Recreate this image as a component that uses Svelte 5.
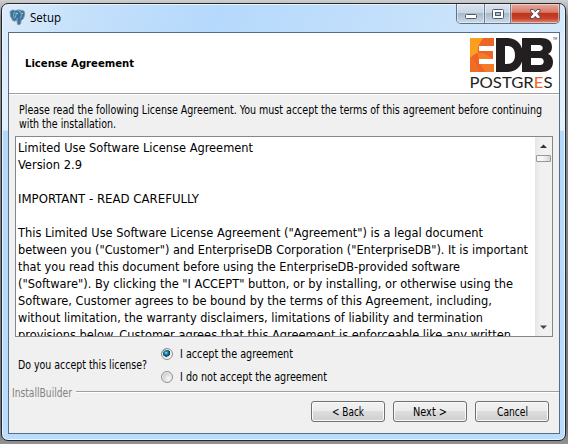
<script>
  const license = [
    ['Limited Use Software License Agreement', 235],
    ['Version 2.9', 64],
    ['', 0],
    ['IMPORTANT - READ CAREFULLY', 181],
    ['', 0],
    ['This Limited Use Software License Agreement ("Agreement") is a legal document', 465],
    ['between you ("Customer") and EnterpriseDB Corporation ("EnterpriseDB"). It is important', 510],
    ['that you read this document before using the EnterpriseDB-provided software', 442],
    ['("Software"). By clicking the "I ACCEPT" button, or by installing, or otherwise using the', 495],
    ['Software, Customer agrees to be bound by the terms of this Agreement, including,', 474],
    ['without limitation, the warranty disclaimers, limitations of liability and termination', 465],
    ['provisions below. Customer agrees that this Agreement is enforceable like any written', 493],
  ];
  const options = [
    ['I accept the agreement', 113],
    ['I do not accept the agreement', 147],
  ];
  const buttons = [['< Back', 32], ['Next >', 34], ['Cancel', 31]];
  let selected = $state(0);
</script>

{#snippet line(text, width, height, baseline)}
  <svg class="line" {width} {height}><text x="0" y={baseline} textLength={width} lengthAdjust="spacingAndGlyphs">{text}</text></svg>
{/snippet}

<div class="desktop">
  <div class="window">
    <header class="titlebar">
      <svg class="elephant" width="17" height="17" viewBox="0 0 17 17">
        <path d="M1 2.5 3.500 1l3 .5L9 1l3 .2L15 2l.8 3-1.200 4.200L13 11l-1 .3-.2 3.200-1.300 1.200-2-.3-.6-4.200-2.400 1-1.700-.6L1.400 7z" fill="#37729c" stroke="#8b98a4" />
        <path d="M5.500 2.500 4.600 5l.5 4.500M7 3.200v2.600l-.7 3M9.500 2.500l2.500.7.4 3-1 3.300M8.200 9v2.500" fill="none" stroke="#a8c9df" stroke-width=".7" />
        <path d="M7.400 4.600h1.300M12.800 4.500h1" stroke="#e6f2fa" />
      </svg>
      <span class="title">{@render line('Setup', 31, 18, 13)}</span>
      <div class="controls">
        <span class="control"><svg width="27" height="19"><rect x="8.500" y="10.500" width="11" height="4" rx="1" fill="#fff" stroke="#535866" /></svg></span>
        <span class="control"><svg width="25" height="19"><rect x="7.500" y="5.500" width="11" height="9" rx="1" fill="#fff" stroke="#535866" /><rect x="10.500" y="8.500" width="5" height="3" fill="#a9bfd6" stroke="#535866" /></svg></span>
        <span class="control close"><svg width="48" height="19"><path d="M19.500 5.500h2.900l1.900 2.300 1.900-2.300h2.900v1.600L26.700 9.800l2.400 2.900v1.800h-2.900l-1.900-2.200-1.900 2.200h-2.900v-1.800l2.400-2.900-2.400-2.700z" fill="#fff" stroke="#535262" /></svg></span>
      </div>
    </header>

    <main class="client">
      <section class="banner">
        <h1>{@render line('License Agreement', 109, 18, 14)}</h1>
        <svg class="logo" width="90" height="56" viewBox="0 0 90 56">
          <defs><clipPath id="e"><path d="M2 3h24v8H11v5h14v8H11v5h15v8H2z" /></clipPath></defs>
          <g clip-path="url(#e)">
            <path d="M0 0h28v40H0z" fill="#ef6424" />
            <path d="M0 0h18C11 7 9 13 10 18 4 19 2 24 0 29z" fill="#f9a01f" />
            <path d="M10 18c0 9 4 15 8 19h9V27c-6-6-9-9-17-9z" fill="#f47b28" />
            <path d="M0 21c4 1 9 7 11 16H0z" fill="#f06d24" />
          </g>
          <path fill-rule="evenodd" fill="#231f20" d="M28 3h11c10 0 16 7 16 17s-6 17-16 17H28zm9 8v18h2c5 0 8-3 8-9s-3-9-8-9z" />
          <path fill-rule="evenodd" fill="#231f20" d="M54 3h19c7 0 11 3 11 9 0 4-2 6-4 7 3 1 5 4 5 8 0 7-5 10-12 10H54zm9 7v6h8c5 0 5-6 0-6zm0 13v7h9c5 0 5-7 0-7z" />
          <text class="wordmark" x="1.500" y="53" textLength="83" lengthAdjust="spacingAndGlyphs">POSTGR<tspan fill="#f26522">E</tspan>S</text>
          <text class="tm" x="85" y="5" textLength="4" lengthAdjust="spacingAndGlyphs">TM</text>
        </svg>
      </section>

      <section class="body">
        <div class="intro">
          {@render line('Please read the following License Agreement. You must accept the terms of this agreement before continuing', 523, 14, 11)}
          {@render line('with the installation.', 97, 14, 11)}
        </div>
        <div class="license">
          <div class="copy">
            {#each license as [text, width]}
              {@render line(text, width, 17, 14)}
            {/each}
          </div>
          <div class="scrollbar">
            <svg width="17" height="17"><path d="M5 11 8.500 7.500l3.500 3.500z" fill="#333" /></svg>
            <span class="thumb"></span>
            <svg class="down" width="17" height="17"><path d="M5 6.500h7L8.500 10z" fill="#444" /></svg>
          </div>
        </div>
        <div class="question">
          <div class="prompt">{@render line('Do you accept this license?', 129, 16, 12)}</div>
          <div class="options">
            {#each options as [text, width], i}
              <label>
                <input type="radio" name="agreement" value={i} bind:group={selected} />
                {@render line(text, width, 16, 12)}
              </label>
            {/each}
          </div>
        </div>
      </section>

      <div class="divider">{@render line('InstallBuilder', 60, 16, 12)}<i></i></div>
      <footer>
        {#each buttons as [text, width]}
          <button>{@render line(text, width, 16, 12)}</button>
        {/each}
      </footer>
    </main>
  </div>
</div>

<style>
  :global(body) { margin: 0; overflow: hidden; }
  * { box-sizing: border-box; }
  svg { display: block; flex: none; }
  .line { overflow: visible; }
  .line text { fill: currentColor; }
  .desktop {
    width: 568px; height: 444px; padding: 3px 1px 3px 1px;
    background: linear-gradient(#cfcfcf, #8d8d8d 4%, #777 96%, #929292);
    font: 11.5px "DejaVu Sans Condensed", "DejaVu Sans", sans-serif;
    font-stretch: condensed; color: #000;
  }
  .window {
    width: 565px; height: 438px; padding: 0 5px 7px 6px;
    border: 1px solid #20272f; border-radius: 7px;
    background: linear-gradient(110deg, #dcecfb 0, #c4e0fb 15%, #b5d9fc 38%, #c4e0fb 70%, #d5e9fc 100%) 0 0 / 100% 29px no-repeat,
      linear-gradient(#d7eafc 0, #e4f1fd 126px, #b4d8fb 127px, #b9dcff);
    box-shadow: inset 0 0 0 1px #e8f5ff;
  }
  .titlebar { height: 28px; display: flex; padding: 5px 0 0 1px; }
  .title { margin: 0 0 0 4px; font: 12px "Open Sans", "Noto Sans", sans-serif; }
  .controls { display: flex; margin: -5px 0 0 auto; height: 20px; border: 1px solid #66717e; border-top: 0; border-radius: 0 0 5px 5px; overflow: hidden; }
  .control { border-right: 1px solid #707c8b; box-shadow: inset 0 0 0 1px #ffffff70; background: linear-gradient(#dbe5ef 0, #c7d4e2 46%, #a6b9cd 48%, #c7dced); }
  .close { border: 0; background: linear-gradient(#e8aa9c 0, #d87967 44%, #bd341b 48%, #c5402a 75%, #e48c70); }
  .client { width: 552px; height: 402px; border: 1px solid #596d80; background: #f0f0f0; display: flex; flex-direction: column; }
  .banner { height: 61px; background: #fff; border-bottom: 1px solid #a0a0a0; display: flex; justify-content: space-between; padding: 2px 1px 0 16px; flex: none; }
  h1 { margin: 18px 0 0; font-size: 11px; font-weight: bold; }
  .wordmark { font: 15.5px Lato, sans-serif; fill: #231f20; }
  .tm { font: 3px Lato, sans-serif; }
  .body { padding: 8px 5px 0 6px; height: 292px; border-top: 1px solid #fff; }
  .intro { padding-left: 4px; height: 33px; }
  .license { height: 201px; width: 538px; border: 1px solid #828790; background: #fff; display: flex; overflow: hidden; }
  .copy { width: 519px; padding: 1px 0 0 2px; font-size: 13px; }
  .scrollbar { width: 17px; background: linear-gradient(90deg, #e6e6e6, #f0f0f0 30%, #f2f2f2); display: flex; flex-direction: column; flex: none; }
  .thumb { width: 15px; height: 7px; margin: 1px 0 0 1px; border: 1px solid #979797; border-radius: 1px; background: linear-gradient(90deg, #f6f6f6 45%, #d4d4d4); }
  .down { margin-top: auto; }
  .question { display: flex; padding: 9px 0 0 3px; }
  .prompt { width: 143px; padding-top: 11px; }
  .options { display: flex; flex-direction: column; gap: 7px; }
  label { display: flex; gap: 7px; align-items: center; height: 16px; }
  input { appearance: none; margin: 0; width: 12px; height: 12px; border: 1px solid #8e8f8f; border-radius: 50%; background: radial-gradient(circle at 65% 65%, #fafafa, #c9cdd0 65%); box-shadow: inset 0 0 0 1px #f4f4f4; }
  input:checked { background: radial-gradient(circle at 42% 38%, #a7eaff 0, #2389b4 18%, #0b3857 43%, #d5dbdf 48%, #f4f4f4 65%); }
  .divider { display: flex; height: 16px; margin: -1px 0 0 3px; color: #838383; gap: 4px; }
  i { flex: 1; height: 2px; margin-top: 6px; border-top: 1px solid #a0a0a0; border-bottom: 1px solid #fff; }
  footer { display: flex; justify-content: flex-end; gap: 8px; padding: 0 10px 0 0; }
  button { width: 74px; height: 21px; padding: 1px 0 0; border: 1px solid #707070; border-radius: 3px; display: flex; align-items: center; justify-content: center; font: inherit; color: inherit; background: linear-gradient(#f2f2f2 0, #ebebeb 48%, #dddddd 50%, #cfcfcf); box-shadow: inset 0 0 0 1px #fafafa; }
</style>
